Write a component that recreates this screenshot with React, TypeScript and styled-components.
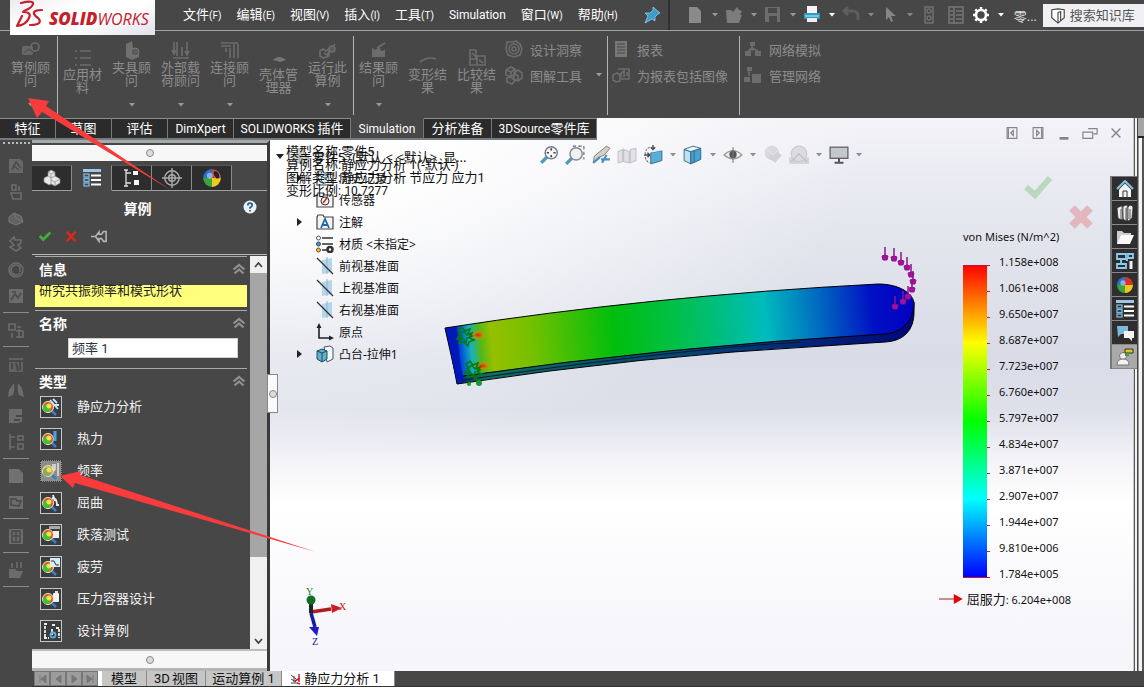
import React from "react";
import styled, { createGlobalStyle, css } from "styled-components";

const ui = `Roboto, "Noto Sans CJK SC", sans-serif`;
const noto = `"Noto Sans", "Noto Sans CJK SC", sans-serif`;

const GlobalStyle = createGlobalStyle`
  * { box-sizing: border-box; }
  body { margin: 0; background: #474747; font-family: ${ui}; font-size: 13px; }
  button { font: inherit; color: inherit; background: none; border: 0; padding: 0; margin: 0; }
`;

const Shell = styled.div`
  position: relative;
  display: flex;
  flex-direction: column;
  min-height: 100vh;
  background: #474747;
  color: #fff;
  overflow: hidden;
`;

/* ---------- text ---------- */
const Latin = styled.span<{ $size: number }>`
  font-size: ${(p) => p.$size}px;
`;

function Mixed({ text, size = 12 }: { text: string; size?: number }) {
  return (
    <>
      {text.split(/([\x20-\x7e]+)/).map((t, i) =>
        i % 2 ? <Latin key={i} $size={size}>{t}</Latin> : t
      )}
    </>
  );
}

/* ---------- title bar ---------- */
const TitleBar = styled.header`
  display: flex;
  align-items: center;
  height: 31px;
  border-bottom: 1px solid #a2a2a2;
  padding-left: 10px;
`;
const Logo = styled.div`
  position: relative;
  z-index: 2;
  align-self: flex-start;
  flex: none;
  display: flex;
  width: 145px;
  height: 35px;
  background: linear-gradient(160deg, #ececf0 0%, #fff 35%, #fff 60%, #dfe2ea 100%);
  color: #c4202c;
`;
const Brand = styled.div`
  font: italic 16px/20px "Open Sans", sans-serif;
  padding-top: 9px;
  margin-left: -1px;
  b { font-weight: 800; font-size: 17px; }
`;
const Menu = styled.nav`
  display: flex;
  gap: 15px;
  margin-left: 28px;
  button { white-space: nowrap; line-height: 20px; }
`;
const PinButton = styled.button`
  margin-left: 25px;
  width: 18px;
  height: 18px;
`;
const QuickBar = styled.div`
  display: flex;
  align-items: center;
  align-self: stretch;
  margin-left: 7px;
  padding-left: 16px;
  border-left: 2px solid #303030;
`;
const Quick = styled.button<{ $w: number }>`
  display: flex;
  align-items: center;
  gap: 8px;
  width: ${(p) => p.$w}px;
  height: 20px;
  flex: none;
`;
const DocName = styled.span`
  width: 36px;
  padding-left: 7px;
  white-space: nowrap;
  color: #e0e0e0;
`;
const Search = styled.label`
  display: flex;
  align-items: center;
  gap: 4px;
  flex: 1;
  height: 23px;
  margin-top: 1px;
  padding-left: 7px;
  background: #f0f0f4;
  overflow: hidden;
  input {
    flex: 1;
    min-width: 0;
    border: 0;
    padding: 0;
    background: none;
    font: 13px ${ui};
    color: #444;
    outline: none;
    &::placeholder { color: #555; opacity: 1; }
  }
`;

function Caret({ color = "#999" }: { color?: string }) {
  return (
    <svg width="6" height="4" viewBox="0 0 6 4"><path d="M0 0h6L3 3.6z" fill={color} /></svg>
  );
}

/* ---------- ribbon ---------- */
const Ribbon = styled.div`
  display: flex;
  height: 87px;
  padding: 5px 0 3px;
  color: #8c8c8c;
  overflow: hidden;
`;
const Group = styled.div<{ $lead?: boolean }>`
  display: flex;
  padding: ${(p) => (p.$lead ? "0 2px 0 6px" : "0 1px 0 0")};
  border-right: 1px solid #b4b4b4;
  &:last-child { border-right: 0; }
`;
const Big = styled.button<{ $low?: boolean }>`
  display: flex;
  flex-direction: column;
  align-items: center;
  width: 49px;
  height: 71px;
  padding-top: ${(p) => (p.$low ? 12 : 5)}px;
  line-height: 13px;
  color: #8c8c8c;
  span { display: block; width: 40px; }
  svg:last-child:not(:first-child) { margin-top: auto; }
`;
const Stack = styled.div<{ $w: number }>`
  display: flex;
  flex-direction: column;
  width: ${(p) => p.$w}px;
  padding-left: 3px;
`;
const Small = styled.button`
  display: flex;
  align-items: center;
  gap: 6px;
  height: 26px;
  white-space: nowrap;
  color: #8c8c8c;
  svg:last-child:not(:first-child) { margin-left: 8px; }
`;

const gray = { fill: "none", stroke: "#6c6c6c", strokeWidth: 1.6 };
const ribbonArt: Record<string, React.ReactNode> = {
  study: <g><rect x="1" y="5" width="11" height="9" rx="2" fill="#686868" /><circle cx="14" cy="6" r="4" {...gray} /><path d="M3 12l5-4 4 3" {...gray} stroke="#555" /></g>,
  material: <g {...gray}><path d="M7 3h11M7 10h11M7 17h11M2 3h2M2 10h2M2 17h2" /></g>,
  fixture: <g fill="#707070"><path d="M4 3l6-3 1 8 6 3v5l-7 3-6-3z" /><circle cx="13" cy="11" r="4" fill="#5c5c5c" stroke="#777" /></g>,
  load: <g {...gray}><path d="M3 1v10M6 1v14M11 6v9M16 1v13M1 9l2 4 2-4M14 10l2 4 2-4M2 17h16" /></g>,
  connect: <g {...gray}><path d="M1 2h17M1 5h10M6 7v4M10 7v10M14 3v14M18 3v14" /></g>,
  shell: <path d="M4 12q6-6 13 0l-6 2z" fill="#757575" />,
  run: <g {...gray}><path d="M2 10l3-2 3 2 3-2v7l-6 2-3-2zM6 12l3 2 8-11" /><circle cx="14" cy="8" r="3" fill="#5c5c5c" /></g>,
  result: <g fill="#6c6c6c"><path d="M3 7l4 2 3-4 2 5 4-1v7H3z" /><path d="M8 7l8-5" {...gray} /></g>,
  deform: <path d="M2 14q8-6 16-3" {...gray} />,
  compare: <g {...gray}><path d="M3 2h6v9H3zM10 8h8v9h-8zM5 5l4 4M12 12l4 3M3 11v6h6" /></g>,
  insight: <g {...gray}><path d="M3 3h6l3-1 4 3 2 5-2 6-6 2-6-2-2-6z" /><circle cx="10" cy="10" r="5" /><circle cx="10" cy="10" r="2" /></g>,
  plot: <g {...gray}><path d="M2 5l5-3 4 2v5l-4 3-5-2zM10 8l4-3 4 3v5l-4 3-4-2zM3 13l4-1 4 4-3 3-5-2zM2 5l5 2 4-3M7 7v5M10 8l4 3v5" /></g>,
  report: <g><rect x="4" y="2" width="12" height="16" fill="#777" /><path d="M6 5h8M6 8h8M6 11h8M6 14h8" stroke="#484848" /></g>,
  image: <g {...gray}><path d="M2 10l4-2 3 2v6l-4 1-3-2zM7 4h11v10h-8M10 12V8M13 12V6M16 11V7M9 9l5-4" /></g>,
  net: <g fill="#6c6c6c"><rect x="7" y="3" width="5" height="4" /><rect x="2" y="12" width="6" height="5" /><rect x="12" y="12" width="6" height="5" /><path d="M9 7v5M5 12l4-3 6 3" {...gray} /></g>,
  netm: <g fill="#6c6c6c"><rect x="4" y="2" width="5" height="4" /><rect x="1" y="12" width="6" height="5" /><rect x="9" y="9" width="9" height="9" /><path d="M6 6v5" {...gray} /></g>,
};
function Art({ name }: { name: string }) {
  return <svg width={20} height={20} viewBox="0 0 20 20" aria-hidden>{ribbonArt[name]}</svg>;
}
function BigButton({ art, label, caret }: { art: string; label: string; caret?: boolean }) {
  return (
    <Big $low={!caret}>
      <Art name={art} />
      <span>{label}</span>
      {caret && <Caret />}
    </Big>
  );
}

/* ---------- workspace ---------- */
const Workspace = styled.main`
  position: relative;
  flex: 1;
  display: grid;
  grid-template-columns: 32px 238px minmax(0, 1fr) 10px;
  grid-template-rows: 22px 1fr 16px;
`;
const RibbonTabs = styled.div`
  grid-area: 1 / 1 / 2 / 4;
  z-index: 1;
  justify-self: start;
  display: flex;
  border-bottom: 2px solid #777b7e;
`;
const RibbonTab = styled.button<{ $w: number; $on?: boolean }>`
  width: ${(p) => p.$w}px;
  background: ${(p) => (p.$on ? "#474747" : "#2b2b2b")};
  border-top: 1px solid ${(p) => (p.$on ? "#474747" : "#8c8c8c")};
  border-right: 1px solid #777;
  color: #fff;
  white-space: nowrap;
  line-height: 18px;
`;
const Rail = styled.aside`
  grid-area: 2 / 1 / 4 / 2;
  display: flex;
  flex-direction: column;
  align-items: center;
  padding-top: 2px;
  &::before { content: ""; width: 27px; border-top: 2px dotted #bbb; margin-bottom: 9px; }
  button { height: 26px; width: 18px; display: flex; align-items: center; }
  hr { width: 26px; margin: 3px 0 4px; border: 0; border-top: 1px solid #8a8a8a; }
`;

/* ---------- property panel ---------- */
const Panel = styled.section`
  grid-area: 2 / 2 / 3 / 3;
  display: flex;
  flex-direction: column;
  border-right: 3px solid #3b3b3b;
  border-top: 3px solid #a4a9ac;
  min-height: 0;
`;
const Grip = styled.div<{ $foot?: boolean }>`
  display: flex;
  align-items: center;
  justify-content: center;
  flex: none;
  height: ${(p) => (p.$foot ? 22 : 18)}px;
  background: #f7f7f7;
  border-top: 2px solid ${(p) => (p.$foot ? "#bdbdbd" : "#474747")};
  ${(p) => p.$foot && css`border-bottom: 3px solid #b5b5b5;`}
  &::after { content: ""; width: 6px; height: 6px; border: 1px solid #888; border-radius: 50%; background: #ddd; }
`;
const PanelTabs = styled.div`
  display: flex;
  height: 26px;
  margin-top: 4px;
  &::after { content: ""; flex: 1; border-bottom: 1px solid #a0a0a0; }
`;
const PanelTab = styled.button<{ $on?: boolean }>`
  display: flex;
  align-items: center;
  justify-content: center;
  width: 40px;
  background: ${(p) => (p.$on ? "#474747" : "#2d2d2d")};
  border-right: 1px solid #8c8c8c;
  border-top: 1px solid ${(p) => (p.$on ? "#474747" : "#555")};
  border-bottom: 1px solid ${(p) => (p.$on ? "#474747" : "#a0a0a0")};
`;
const PanelTitle = styled.div`
  display: grid;
  grid-template-columns: 1fr auto;
  align-items: center;
  height: 34px;
  padding: 0 10px;
  h2 { margin: 0; font-size: 14px; font-weight: 700; text-align: center; padding-right: 10px; }
`;
const Actions = styled.div`
  display: flex;
  align-items: center;
  gap: 11px;
  height: 30px;
  padding: 0 0 8px 5px;
  border-bottom: 1px solid #b8b8b8;
  margin-bottom: 1px;
  button { height: 16px; }
`;
const ScrollArea = styled.div`
  flex: 1;
  display: flex;
  min-height: 0;
`;
const Content = styled.div`
  flex: 1;
  padding: 0 3px;
`;
const Section = styled.section<{ $h?: number }>`
  border-top: 1px solid #a8a8a8;
  height: ${(p) => (p.$h ? p.$h + "px" : "auto")};
`;
const SectionHead = styled.div`
  display: flex;
  align-items: center;
  justify-content: space-between;
  height: 22px;
  padding: 2px 1px 0 4px;
  h3 { margin: 0; font-size: 14px; font-weight: 700; }
  button { display: flex; }
`;
const Note = styled.p`
  margin: 6px 0 0;
  height: 22px;
  padding-left: 4px;
  background: #ffff7d;
  color: #222;
  line-height: 12px;
`;
const NameInput = styled.input`
  display: block;
  width: 170px;
  height: 20px;
  margin: 5px 0 0 33px;
  padding: 0 3px 2px;
  border: 1px solid #d0d0d0;
  background: #fff;
  color: #2c3440;
  font: 13px ${ui};
`;
const Option = styled.label`
  display: flex;
  align-items: center;
  gap: 15px;
  height: 32px;
  padding-left: 5px;
  line-height: 18px;
  color: #f0f0f0;
`;
const OptionBox = styled.span`
  display: grid;
  width: 22px;
  height: 22px;
  > * { grid-area: 1 / 1; }
  svg { pointer-events: none; margin: 1px; }
  input {
    appearance: none;
    margin: 0;
    width: 22px;
    height: 22px;
    border: 1px solid #c8c8c8;
    background: #3a3c3e;
    &:checked { background: #8c8c88; border: 1px dotted #333; }
  }
`;
const Scrollbar = styled.div`
  width: 17px;
  display: flex;
  flex-direction: column;
  background: #f0f0f0;
  button { height: 17px; display: flex; align-items: center; justify-content: center; }
`;
const Thumb = styled.div`
  height: 284px;
  background: #a6a6a6;
  & + button { margin-top: auto; }
`;

/* ---------- graphics area ---------- */
const Viewport = styled.section`
  grid-area: 1 / 3 / 3 / 4;
  position: relative;
  background:
    radial-gradient(ellipse 600px 340px at 0% 0%, #fff 0%, rgba(255,255,255,.95) 30%, rgba(255,255,255,0) 100%),
    linear-gradient(180deg, #f3f3f8 0%, #e4e6ee 20%, #d9dce7 43%, #dee0ea 53%, #f4f4f8 62%, #fff 70%, #f9f9fc 85%, #f5f5fa 100%);
  border-right: 1px solid #c8c8c8;
  color: #111;
`;
const ViewBar = styled.div`
  display: flex;
  justify-content: space-between;
  padding: 6px 9px 0 269px;
`;
const ViewTools = styled.div`
  display: flex;
  gap: 6px;
  padding-top: 21px;
`;
const Tool = styled.button<{ $menu?: boolean }>`
  display: flex;
  align-items: center;
  justify-content: space-between;
  width: ${(p) => (p.$menu ? 33 : 20)}px;
  margin-right: ${(p) => (p.$menu ? 1 : 0)}px;
  height: 20px;
`;
const WindowButtons = styled.div`
  display: flex;
  gap: 10px;
  button { width: 16px; height: 18px; }
`;
const Tree = styled.ul`
  position: absolute;
  left: 4px;
  top: 27px;
  margin: 0;
  padding: 0;
  list-style: none;
  font: 12px ${noto};
`;
const Node = styled.li<{ $root?: boolean }>`
  display: flex;
  align-items: center;
  gap: ${(p) => (p.$root ? 2 : 5)}px;
  height: 22px;
  padding-left: ${(p) => (p.$root ? 0 : 21)}px;
  font-size: ${(p) => (p.$root ? 13 : 12)}px;
  white-space: pre;
`;
const Twist = styled.span`
  display: flex;
  width: 16px;
  padding-left: 2px;
`;
const PlotInfo = styled.div`
  position: absolute;
  left: 16px;
  top: 27px;
  line-height: 13px;
  white-space: pre;
`;
const Model = styled.svg`
  position: absolute;
  left: 160px;
  top: 122px;
`;
const Triad = styled.svg`
  position: absolute;
  left: 30px;
  bottom: 21px;
`;
const Confirm = styled.div`
  position: absolute;
  right: 39px;
  top: 56px;
  display: flex;
  align-items: flex-start;
  gap: 15px;
  button + button { margin-top: 30px; }
`;
const Legend = styled.div`
  position: absolute;
  right: 62px;
  top: 111px;
  width: 132px;
  font: 11px/16px ${noto};
`;
const LegendTitle = styled.div`
  padding-left: 24px;
  white-space: nowrap;
  height: 20px;
`;
const LegendScale = styled.div`
  display: flex;
  padding-left: 24px;
  > svg { margin-top: 16px; }
  ol { margin: 0; padding: 0 0 0 8px; list-style: none; }
  li { height: 26px; line-height: 26px; }
`;
const Yield = styled.div`
  display: flex;
  align-items: center;
  gap: 3px;
  height: 24px;
  white-space: nowrap;
  font-size: 13px;
`;
const Handle = styled.button`
  position: absolute;
  z-index: 2;
  left: 267px;
  top: 256px;
  width: 11px;
  height: 39px;
  background: #fafafa;
  border: 1px solid #888;
  display: flex;
  align-items: center;
  justify-content: center;
  &::after { content: ""; width: 6px; height: 6px; border: 1px solid #888; border-radius: 50%; background: #ddd; flex: none; }
`;
const TaskPane = styled.div`
  position: absolute;
  z-index: 2;
  right: 7px;
  top: 58px;
  border: solid #777;
  border-width: 1px 0 0 2px;
`;
const TaskButton = styled.button<{ $on?: boolean }>`
  display: flex;
  align-items: center;
  justify-content: center;
  width: 25px;
  height: 24px;
  background: ${(p) => (p.$on ? "#a9a9a9" : "#2e2e2e")};
  border-bottom: 1px solid #888;
`;
const Frame = styled.div`
  grid-area: 1 / 4 / 3 / 5;
  background: linear-gradient(90deg, #555 0 1px, #f4f4f4 1px 3px, #444 3px 4px, #999 4px 5px, #f4f4f4 5px 8px, #555 8px 10px);
  &::before { content: ""; display: block; height: 18px; margin-left: 4px; background: #a5a5a8; border-bottom: 2px solid #222; }
`;
const Sheets = styled.div`
  grid-area: 3 / 2 / 4 / 5;
  display: flex;
  height: 16px;
  border-bottom: 1px solid #333;
  padding-left: 2px;
`;
const SheetNav = styled.button`
  display: flex;
  align-items: center;
  justify-content: center;
  width: 16px;
  background: #9c9c9c;
  border: 1px solid #777;
`;
const Sheet = styled.button<{ $w: number; $on?: boolean }>`
  display: flex;
  align-items: center;
  justify-content: center;
  gap: 2px;
  width: ${(p) => p.$w}px;
  padding-right: ${(p) => (p.$on ? 6 : 0)}px;
  background: ${(p) => (p.$on ? "#fff" : "#c6c6c6")};
  border-right: 1px solid #888;
  color: #111;
  white-space: nowrap;
  line-height: 12px;
`;
const SheetGap = styled.span`
  width: 4px;
  background: #fff;
`;
const Callouts = styled.svg`
  position: absolute;
  z-index: 5;
  left: 0;
  top: 0;
  pointer-events: none;
`;

/* ---------- drawings ---------- */
const Sphere = ({ x = 9, y = 9, r = 7 }: { x?: number; y?: number; r?: number }) => (
  <g>
    <path d={`M${x} ${y}L${x - r} ${y}A${r} ${r} 0 0 1 ${x} ${y - r}z`} fill="#2c6fd0" />
    <path d={`M${x} ${y}L${x} ${y - r}A${r} ${r} 0 0 1 ${x + r} ${y}z`} fill="#d8322a" />
    <path d={`M${x} ${y}L${x + r} ${y}A${r} ${r} 0 0 1 ${x} ${y + r}z`} fill="#f2c81c" />
    <path d={`M${x} ${y}L${x} ${y + r}A${r} ${r} 0 0 1 ${x - r} ${y}z`} fill="#3aa43c" />
    <circle cx={x - 2} cy={y - 2} r={r / 3} fill="#fff" opacity=".45" />
  </g>
);
const List = () => (
  <g>
    <rect x="0" y="0" width="18" height="3" fill="#9cc8e8" />
    <g fill="none" stroke="#7db8e0" strokeWidth="1.300"><rect x="1" y="5" width="5" height="3" /><rect x="1" y="9.500" width="5" height="3" /><rect x="1" y="14" width="5" height="3" /></g>
    <path d="M8 6.500h10M8 11h10M8 15.500h10" stroke="#fff" strokeWidth="1.800" />
  </g>
);
const Svg = ({ s = 18, children }: { s?: number; children: React.ReactNode }) => (
  <svg width={s} height={s} viewBox="0 0 18 18" aria-hidden>{children}</svg>
);
const Chevrons = () => (
  <svg width="14" height="12" viewBox="0 0 14 12" aria-hidden>
    <path d="M1.500 6.500L7 2l5.500 4.500M2.500 10.500L7 6.500l4.500 4" fill="none" stroke="#909090" strokeWidth="2.200" />
  </svg>
);

const quickIcons: { art: React.ReactNode; w: number; caret?: string }[] = [
  { w: 39, caret: "#999", art: <path d="M3 1h8l4 4v12H3z" fill="#8a8a8a" /> },
  { w: 39, caret: "#999", art: <path d="M1 4h5l2 2 4-5 2 3 3 1-2 4 2 0-3 8H2z" fill="#7c7c7c" /> },
  { w: 39, caret: "#999", art: <g><path d="M1 1h15v15H1z" fill="#6c6c6c" /><path d="M4 2h9v5H4zM5 10h8v6H5z" fill="#484848" /></g> },
  { w: 39, caret: "#fff", art: <g><path d="M4 0h10v7H4z" fill="#f4f4f4" /><rect x="1" y="7" width="16" height="6" rx="1" fill="#2e9cc4" /><path d="M2 10h14" stroke="#cfeaf4" /><path d="M4 12h10v4H4z" fill="#eee" /></g> },
  { w: 39, caret: "#888", art: <path d="M2 5h9q5 0 5 5v4M6 1L2 5l4 4" fill="none" stroke="#5e5e5e" strokeWidth="3" /> },
  { w: 39, caret: "#888", art: <path d="M5 1v13l3-3 2 5 2-1-2-5h5z" fill="#858585" /> },
  { w: 27, art: <g fill="none" stroke="#707070" strokeWidth="1.500"><rect x="5" y="1" width="8" height="16" /><circle cx="9" cy="5" r="2" /><circle cx="9" cy="12" r="2" /></g> },
  { w: 25, art: <g fill="none" stroke="#777" strokeWidth="1.500"><rect x="2" y="1" width="14" height="16" /><path d="M7 1v16M9 5h6M9 9h6M9 13h6M3 5h3M3 9h3M3 13h3" /></g> },
  { w: 35, caret: "#fff", art: <g><circle cx="9" cy="9" r="5" fill="none" stroke="#fff" strokeWidth="2.600" /><path d="M9 1v3M9 14v3M1 9h3M14 9h3M3.300 3.300l2 2M12.700 12.700l2 2M14.700 3.300l-2 2M5.300 12.700l-2 2" stroke="#fff" strokeWidth="2.500" /></g> },
];

const railArt: React.ReactNode[] = [
  <g><path d="M2 2h11l3 3v11H2z" fill="#686868" /><path d="M5 13l4-8 5 6M6 8l6 5" {...gray} stroke="#4c4c4c" /></g>,
  <g {...gray}><rect x="5" y="2" width="4" height="5" /><path d="M4 10h10v6H6zM12 3v5" /></g>,
  <g fill="#626262" stroke="#777"><path d="M2 8l5-4 7 3 2 6-7 3-7-3z" /><path d="M7 4l2 5 6 3" fill="none" /></g>,
  <path d="M3 6l4-4 1 3h6v3l-3 2 3 3-5 3-6-4 4-2z" {...gray} />,
  <g {...gray}><circle cx="9" cy="9" r="7" /><path d="M13 12a5 5 0 1 1 0-6v5" /></g>,
  <g><rect x="2" y="2" width="14" height="14" fill="#6c6c6c" /><path d="M4 13l4-6 3 4 3-5M5 5h4" {...gray} stroke="#4c4c4c" /></g>,
  null,
  <g {...gray}><path d="M2 3h6v6H2zM10 6h4M5 12v5M9 10h7v6H9M12 8v9" /></g>,
  null,
  <g><rect x="2" y="3" width="14" height="14" fill="#626262" /><path d="M2 6h14M5 8v6M9 8l2 8M13 7v8" stroke="#484848" strokeWidth="2" /></g>,
  <path d="M7 2q1 7-1 12l-5 2 1-7zM11 2q-1 7 1 12l5 2-2-9z" fill="#6c6c6c" />,
  <g><path d="M2 2h13v14H2z" fill="#6c6c6c" /><path d="M9 9h7v7h-4M7 13h6" fill="none" stroke="#484848" strokeWidth="2" /></g>,
  <g {...gray}><path d="M3 1v16M3 4h5M3 14h5M11 3h5v4h-5zM11 11h5v5h-5z" /></g>,
  null,
  <path d="M2 2h10l4 4v10H2z" fill="#717171" />,
  <g><path d="M2 3h14v13H2z" fill="#6c6c6c" /><path d="M4 12V6h5l1 2h4l-2 5z" fill="none" stroke="#484848" strokeWidth="1.500" /></g>,
  null,
  <g><path d="M2 2h14v15H2z" fill="#6c6c6c" /><path d="M5 15V4h8v11zM9 5v9M6 9h6" fill="none" stroke="#484848" strokeWidth="1.500" /></g>,
  null,
  <g fill="#6c6c6c"><path d="M2 8h6l2 2h6l-3 7H2z" /><path d="M5 2v5M10 1v6M14 1v6" {...gray} /></g>,
  null,
];

const studyExtras: React.ReactNode[] = [
  <path d="M9 3l8 9M12 2l4 4M14 8h4" stroke="#cfe4ff" strokeWidth="1.800" />,
  <path d="M14 2v10" stroke="#4aa0f0" strokeWidth="3" />,
  <path d="M12 3v5q1 3 2 0V3M17 2v13" stroke="#e8e4d8" fill="none" strokeWidth="1.500" />,
  <path d="M11 5q5 0 5 7h2M12 2l2 6" stroke="#eee" fill="none" strokeWidth="1.800" />,
  <g><path d="M8 1h11v3H8z" fill="#aaa" /><rect x="12" y="6" width="6" height="7" fill="#eee" /></g>,
  <g><rect x="9" y="1" width="10" height="9" fill="#d8ecfa" /><path d="M10 4h3l2 4h3" stroke="#333" fill="none" /></g>,
  <g><rect x="12" y="4" width="6" height="9" rx="1" fill="#f4f4f4" /><path d="M14 2h3v2h-3z" fill="#ddd" /></g>,
];
const studies = ["静应力分析", "热力", "频率", "屈曲", "跌落测试", "疲劳", "压力容器设计", "设计算例"];

const Plane = () => (
  <g><path d="M6 3l10-2v14l-10 2z" fill="#b5d6ea" /><path d="M11 0v17" stroke="#8fb6cc" /><path d="M1 1l16 16" stroke="#333" strokeWidth="1.300" /></g>
);
const Folder = ({ children }: { children: React.ReactNode }) => (
  <g><path d="M1 16V4l1-2h5l1 2h9v12z" fill="#f4f4f4" stroke="#444" strokeWidth="1.200" />{children}</g>
);
const nodes: { label: string; open?: boolean; art: React.ReactNode }[] = [
  { label: "历史记录", open: true, art: <Folder><circle cx="9" cy="10" r="4" fill="#d8eef8" stroke="#3c7ea0" /><path d="M9 8v2l2 1" stroke="#333" fill="none" /></Folder> },
  { label: "传感器", art: <Folder><circle cx="9" cy="10" r="4" fill="none" stroke="#333" /><path d="M7 12l4-5" stroke="#d02020" strokeWidth="1.500" /></Folder> },
  { label: "注解", open: true, art: <Folder><path d="M5 15L9 6l4 9M6.500 12h5" fill="none" stroke="#2468a0" strokeWidth="1.800" /></Folder> },
  { label: "材质 <未指定>", art: <g><circle cx="2.500" cy="3" r="2" fill="#fff" stroke="#555" /><circle cx="2.500" cy="9" r="2" fill="#3c9cd8" stroke="#345" /><circle cx="2.500" cy="15" r="2" fill="#f0c020" stroke="#653" /><path d="M6 3h11M6 9h11M6 15h5" stroke="#333" strokeWidth="1.500" /><circle cx="14" cy="14.500" r="2.500" fill="#fff" stroke="#333" strokeWidth="2.500" /></g> },
  { label: "前视基准面", art: <Plane /> },
  { label: "上视基准面", art: <Plane /> },
  { label: "右视基准面", art: <Plane /> },
  { label: "原点", art: <g><path d="M3 4v11h11" fill="none" stroke="#222" strokeWidth="1.600" /><path d="M3 0l2.500 5h-5zM18 15l-5 2.500v-5z" fill="#222" /></g> },
  { label: "凸台-拉伸1", open: true, art: <g><path d="M8 2l6-1 3 2v11l-6 3z" fill="#f4f8fa" stroke="#456" /><path d="M1 6l5-2 5 2v8l-5 3-5-3z" fill="#5fb0d0" stroke="#1c4a60" /><path d="M1 6l5 2 5-2M6 8v9" stroke="#1c4a60" fill="none" /></g> },
];

const viewTools: { art: React.ReactNode; menu?: boolean }[] = [
  { art: <g><path d="M2 16l5-5" stroke="#4a9cc4" strokeWidth="3" /><circle cx="11" cy="7" r="5.500" fill="#f4f8fa" stroke="#778" strokeWidth="1.300" /><path d="M11 3v2M11 9v2M7 7h2M13 7h2" stroke="#444" strokeWidth="1.500" /></g> },
  { art: <g><path d="M7 1h10v12" fill="none" stroke="#666" strokeDasharray="3 2" /><path d="M1 17l5-5" stroke="#4a9cc4" strokeWidth="3" /><circle cx="10" cy="8" r="5.500" fill="#eef2f0" stroke="#889" strokeWidth="1.300" /></g> },
  { art: <g><path d="M14 1l3 2-5 6-5 2-5 5 1-6z" fill="#d8d0c4" stroke="#777" strokeWidth=".8" /><path d="M2 16l6-5M9 13h8M14 9l-4 7" stroke="#4a90c0" strokeWidth="2" /></g> },
  { art: <g fill="#e2e2e6" stroke="#c4c4ca"><path d="M1 6l4-2v11l-4 1zM6 4l5 2v10l-5-1zM12 4l5-1v11l-5 2z" /></g> },
  { menu: true, art: <g><path d="M7 7l10-2v9l-10 3z" fill="#5aaedc" stroke="#2c6480" strokeWidth=".8" /><path d="M7 7l3-2 7-1v1z" fill="#d8ecf6" /><path d="M1 9h5M4 7l2 2-2 2M9 0v4M7 2l2 2 2-2" stroke="#444" fill="none" strokeWidth="1.200" /><path d="M6 2Q2 4 2 8M2 11q1 4 4 5" stroke="#777" fill="none" strokeDasharray="2 1" /></g> },
  { menu: true, art: <g stroke="#2c6480" strokeWidth=".8"><path d="M1 4l6 2v11l-6-3z" fill="#bfe0ee" /><path d="M7 6l9-3v10l-9 4z" fill="#4aa2d0" /><path d="M1 4l8-3 7 2-9 3z" fill="#e8f4fa" /><path d="M10 5v11" /></g> },
  { menu: true, art: <g><path d="M1 9q8-8 16 0-8 7-16 0z" fill="#eee" stroke="#999" strokeWidth="1.200" /><circle cx="9" cy="8.500" r="3.300" fill="#555" /><path d="M9 2v14" stroke="#777" /></g> },
  { art: <g opacity=".6"><circle cx="8" cy="7" r="6.500" fill="#c8c8ce" /><path d="M11 5l6 4-6 7-7-5z" fill="#bcbcc2" /><path d="M4 4l5 5 4-4" stroke="#ddd" fill="none" /></g> },
  { menu: true, art: <g opacity=".7"><path d="M0 11h18v6H0z" fill="#c8c8ce" /><circle cx="9" cy="8" r="7" fill="#d4d4d8" stroke="#b8b8be" /><path d="M2 15l7-7 7 7" stroke="#aaa" fill="none" /></g> },
  { menu: true, art: <g><rect x="1" y="2" width="16" height="10" fill="#c4c8cc" stroke="#666" strokeWidth="1.200" /><path d="M9 12v4M5 16h8" stroke="#555" strokeWidth="1.800" /></g> },
];
const windowIcons = [
  <path d="M3.500 3v12h11V3zM7.500 9l3-3v6zM5 4v10" />, <path d="M3.500 3v12h11V3zM10.500 9l-3-3v6zM13 4v10" />,
  <path d="M4 15h10" strokeWidth="3" />, <path d="M7 4h10v6h-4M1 8h11v7H1z" />, <path d="M4 4l10 10M14 4L4 14" strokeWidth="1.600" />,
];
const taskIcons: React.ReactNode[] = [
  <g><path d="M1 9l8-8 8 8" fill="none" stroke="#7cc0e4" strokeWidth="2.200" /><path d="M3 9.500l6-6 6 6V17H3z" fill="#f4f4f4" /><path d="M7 17v-6h4v6" fill="none" stroke="#333" /></g>,
  <g fill="#eee" stroke="#333" strokeWidth=".8"><path d="M1 4l4-2 2 1v12l-2 1-3-2zM6 3l4-2 2 1v13l-2 2-3-2zM11 3l4-2 2 2-1 11-3 3-2-1z" /><path d="M5 5v11M10 4v12M14 5v11" /></g>,
  <g><path d="M1 16V3h5l2 2h7v3" fill="#ccc" /><path d="M1 16l4-9h13l-4 9z" fill="#f8f8f8" /></g>,
  <g fill="none" stroke="#8ccaf0" strokeWidth="1.800"><path d="M1 2h9v5H1zM12 2h5v4h-5zM1 16h9v-4H1zM5 7v5M12 8h-2" /><path d="M15 9v8" stroke="#eee" strokeWidth="3" /></g>,
  <Sphere r={8} />,
  <List />,
  <g><path d="M1 2h11v8H5l-3 3z" fill="#7ab8dc" /><path d="M8 7h10v7h-2v3l-3-3H8z" fill="#f4f4f4" /></g>,
  <g><circle cx="7" cy="8" r="3.500" fill="#eee" stroke="#777" /><path d="M1 17q0-6 6-6t6 6z" fill="#f4f4f4" stroke="#777" /><path d="M9 1h8v4H9z" fill="#e0c020" stroke="#333" /><path d="M9 5h4v3H9z" fill="#40a040" /></g>,
];
const levels = ["1.158e+008", "1.061e+008", "9.650e+007", "8.687e+007", "7.723e+007", "6.760e+007", "5.797e+007", "4.834e+007", "3.871e+007", "2.907e+007", "1.944e+007", "9.810e+006", "1.784e+005"];
const loads = [[885, 257], [894, 258], [901, 262], [907, 267], [911, 274], [913, 281], [912, 289], [908, 296], [903, 301], [895, 306]];

function StressModel() {
  const knot = "l4-3 3 4 5-2-2 5 4 2-5 2-1 4-4-4-5 1 3-5z";
  return (
    <Model width="500" height="160" viewBox="430 240 500 160" aria-label="von Mises">
      <defs>
        <linearGradient id="stress" gradientUnits="userSpaceOnUse" x1="445" y1="350" x2="914" y2="300">
          <stop offset="0" stopColor="#0014b8" /><stop offset=".03" stopColor="#0040d8" />
          <stop offset=".055" stopColor="#18b0c0" /><stop offset=".075" stopColor="#50b818" />
          <stop offset=".1" stopColor="#94c000" /><stop offset=".18" stopColor="#78c000" />
          <stop offset=".36" stopColor="#00be0c" /><stop offset=".5" stopColor="#00c04c" />
          <stop offset=".6" stopColor="#00be88" /><stop offset=".68" stopColor="#00bcbc" />
          <stop offset=".8" stopColor="#0068c0" /><stop offset=".91" stopColor="#0010c4" /><stop offset="1" stopColor="#0000c0" />
        </linearGradient>
        <linearGradient id="side" x1="0" x2="1">
          <stop offset="0" stopColor="#000a80" /><stop offset=".08" stopColor="#107060" />
          <stop offset=".3" stopColor="#085868" /><stop offset=".6" stopColor="#063a78" /><stop offset="1" stopColor="#000878" />
        </linearGradient>
        <radialGradient id="hot"><stop offset="0" stopColor="#e02000" /><stop offset=".5" stopColor="#e07000" stopOpacity=".8" /><stop offset="1" stopColor="#c0b000" stopOpacity="0" /></radialGradient>
      </defs>
      <path d="M447 330L457 384Q640 356 823 346L885 342C904 341 914 330 914 312V302L880 310L640 330z" fill="url(#side)" stroke="#000" />
      <path d="M445 328Q650 296 878 284C900 284 914 294 914 304C914 320 902 333 885 334Q670 346 456 377z" fill="url(#stress)" stroke="#000" />
      <path d="M457 381Q670 350 800 342" fill="none" stroke="#001a30" />
      <path d="M446 329l11 54 7-1-4-21-3-34z" fill="#0018b8" />
      <ellipse cx="478" cy="335" rx="8" ry="5" fill="url(#hot)" />
      <ellipse cx="482" cy="366" rx="9" ry="5" fill="url(#hot)" />
      <g fill="none" stroke="#007c10" strokeWidth="1.600">
        <path d={"M458 330" + knot} /><path d={"M460 334" + knot} /><path d={"M466 364" + knot} /><path d={"M468 368" + knot} />
      </g>
      <g fill="#10a020"><circle cx="469" cy="384" r="2" /><circle cx="479" cy="383" r="3" /></g>
      <g stroke="#901090" fill="#a8109c">
        {loads.map(([x, y]) => (
          <g key={y}><path d={`M${x} ${y - 10}v10`} strokeWidth="1.500" /><path d={`M${x - 3} ${y - 1}l3-1 3 1-1 4h-4z`} /></g>
        ))}
      </g>
    </Model>
  );
}

export default function App() {
  return (
    <Shell>
      <GlobalStyle />
      <TitleBar>
        <Logo>
          <svg width="40" height="35" viewBox="0 0 40 35" aria-hidden>
            <g fill="none" stroke="#c4202c" strokeWidth="2.200" strokeLinecap="round" strokeLinejoin="round">
              <path d="M11 3q13-3 12 1-1 4-9 7" /><path d="M13 12q9 0 6 6-3 7-12 8l5-10" />
              <path d="M32 10q-9 0-8 4 1 2 4 4 3 3 1 5-2 2-9 2" />
            </g>
          </svg>
          <Brand><b>SOLID</b>WORKS</Brand>
        </Logo>
        <Menu>
          {["文件(F)", "编辑(E)", "视图(V)", "插入(I)", "工具(T)", "Simulation", "窗口(W)", "帮助(H)"].map((m) => (
            <button key={m}><Mixed text={m} size={m === "Simulation" ? 12 : 10} /></button>
          ))}
        </Menu>
        <PinButton aria-label="固定">
          <Svg><path d="M10 1l7 6-2 1-3 3 0 4-3-2-7 4 3-7-3-3h5l3-3z" fill="#3c9ccc" stroke="#9ccce4" strokeWidth=".8" /></Svg>
        </PinButton>
        <QuickBar>
          {quickIcons.map((q, i) => (
            <Quick key={i} $w={q.w}><Svg>{q.art}</Svg>{q.caret && <Caret color={q.caret} />}</Quick>
          ))}
          <DocName>零...</DocName>
        </QuickBar>
        <Search>
          <Svg s={16}><path d="M2 2l7-1 7 1v9l-7 6-7-6z" fill="#fff" stroke="#444" strokeWidth="1.300" /><path d="M9 5v12M9 5l3-1v10" fill="none" stroke="#444" strokeWidth="1.300" /></Svg>
          <input placeholder="搜索知识库" aria-label="搜索知识库" />
        </Search>
      </TitleBar>

      <Ribbon>
        <Group $lead><BigButton art="study" label="算例顾问" caret /></Group>
        <Group>
          <BigButton art="material" label="应用材料" />
          <BigButton art="fixture" label="夹具顾问" caret />
          <BigButton art="load" label="外部载荷顾问" caret />
          <BigButton art="connect" label="连接顾问" caret />
          <BigButton art="shell" label="壳体管理器" />
          <BigButton art="run" label="运行此算例" caret />
        </Group>
        <Group>
          <BigButton art="result" label="结果顾问" caret />
          <BigButton art="deform" label="变形结果" />
          <BigButton art="compare" label="比较结果" />
          <Stack $w={105}>
            <Small><Art name="insight" />设计洞察</Small>
            <Small><Art name="plot" />图解工具<Caret /></Small>
          </Stack>
        </Group>
        <Group>
          <Stack $w={130}>
            <Small><Art name="report" />报表</Small>
            <Small><Art name="image" />为报表包括图像</Small>
          </Stack>
        </Group>
        <Group>
          <Stack $w={110}>
            <Small><Art name="net" />网络模拟</Small>
            <Small><Art name="netm" />管理网络</Small>
          </Stack>
        </Group>
      </Ribbon>

      <Workspace>
        <RibbonTabs>
          <RibbonTab $w={56}>特征</RibbonTab>
          <RibbonTab $w={56}>草图</RibbonTab>
          <RibbonTab $w={56}>评估</RibbonTab>
          <RibbonTab $w={66}><Mixed text="DimXpert" /></RibbonTab>
          <RibbonTab $w={117}><Mixed text="SOLIDWORKS 插件" /></RibbonTab>
          <RibbonTab $w={73} $on><Mixed text="Simulation" /></RibbonTab>
          <RibbonTab $w={68}>分析准备</RibbonTab>
          <RibbonTab $w={105}><Mixed text="3DSource零件库" /></RibbonTab>
        </RibbonTabs>

        <Rail>
          {railArt.map((a, i) => (a ? <button key={i}><Svg>{a}</Svg></button> : <hr key={i} />))}
        </Rail>

        <Panel>
          <Grip />
          <PanelTabs>
            <PanelTab><Svg><g fill="#e8e8e8" stroke="#888" strokeWidth=".7"><path d="M1 9l4-2V3l3-2 4 2v4l5 3v4l-5 3-4-2-2 1-5-3z" /><path d="M5 7l3 2 4-2M8 9v6M12 13l5-3M12 13v4M12 13l-4-2M5 3l3 2 4-2M8 5v4" fill="none" /></g></Svg></PanelTab>
            <PanelTab $on><Svg><List /></Svg></PanelTab>
            <PanelTab><Svg><path d="M3 1v16M3 4h5M3 14h5M1 1h4M1 17h4" stroke="#ddd" strokeWidth="1.300" fill="none" /><path d="M10 2h5v4h-5zM11 11h5v5h-5z" fill="#f4f4f4" /></Svg></PanelTab>
            <PanelTab><Svg s={20}><g fill="none" stroke="#aaa" strokeWidth="1.300"><circle cx="9" cy="9" r="6.500" /><path d="M9 0v18M0 9h18" /><circle cx="9" cy="9" r="3" /></g></Svg></PanelTab>
            <PanelTab><Svg s={20}><Sphere r={8} /><ellipse cx="13" cy="6" rx="2.500" ry="4" fill="#222" stroke="#c88" strokeWidth=".6" transform="rotate(-30 13 6)" /></Svg></PanelTab>
          </PanelTabs>
          <PanelTitle>
            <h2>算例</h2>
            <button aria-label="帮助"><svg width="14" height="14" viewBox="0 0 14 14"><circle cx="7" cy="7" r="6.500" fill="#e8f2f8" /><path d="M4.800 5.400q0-2.200 2.200-2.200t2.200 2q0 1.300-2.200 2.300v1.200M7 10v1.600" fill="none" stroke="#1f5f88" strokeWidth="1.700" /></svg></button>
          </PanelTitle>
          <Actions>
            <button aria-label="确定"><Svg s={16}><path d="M3 9l4 4 8-8" fill="none" stroke="#3fae3a" strokeWidth="3" /></Svg></button>
            <button aria-label="取消"><Svg s={16}><path d="M3 4l10 11M13 4L3 15" fill="none" stroke="#d22a20" strokeWidth="3" /></Svg></button>
            <button aria-label="保持可见"><Svg s={16}><path d="M0 9.500h5l4-5v2.500h3l2-3h3v11h-3l-2-3H9v3l-4-5.500" fill="none" stroke="#b4b4b4" strokeWidth="1.800" /></Svg></button>
          </Actions>
          <ScrollArea>
            <Content>
              <Section $h={54}>
                <SectionHead><h3>信息</h3><button aria-label="折叠"><Chevrons /></button></SectionHead>
                <Note>研究共振频率和模式形状</Note>
              </Section>
              <Section $h={58}>
                <SectionHead><h3><label htmlFor="study-name">名称</label></h3><button aria-label="折叠"><Chevrons /></button></SectionHead>
                <NameInput id="study-name" defaultValue="频率 1" />
              </Section>
              <Section>
                <SectionHead><h3>类型</h3><button aria-label="折叠"><Chevrons /></button></SectionHead>
                {studies.map((s, i) => (
                  <Option key={s}>
                    <OptionBox>
                      <input type="radio" name="study" defaultChecked={i === 2} />
                      <svg width="20" height="20" viewBox="0 0 20 20" aria-hidden>
                        {i < 7 ? (
                          <g>
                            <path d="M10 13l5 5" stroke="#3c7cd0" strokeWidth="2.500" />
                            <circle cx="7" cy="10" r="5.500" fill={i === 2 ? "#c8b460" : "#e84c20"} stroke={i === 2 ? "#d8e0d0" : "#e8f0d0"} />
                            <circle cx="6" cy="11" r="4" fill={i === 2 ? "#88a860" : "#46c030"} /><circle cx="8" cy="9" r="2.500" fill="#f4e050" />
                            {studyExtras[i]}
                          </g>
                        ) : (
                          <g fill="none" stroke="#eee" strokeWidth="1.800"><path d="M3 3h4M4 5v12M3 17h5M11 4h3M15 7h3v10M11 8v6" strokeDasharray="3 1" /><circle cx="12" cy="14" r="2.500" stroke="#60a8e0" /></g>
                        )}
                      </svg>
                    </OptionBox>
                    {s}
                  </Option>
                ))}
              </Section>
            </Content>
            <Scrollbar>
              <button aria-label="向上"><svg width="9" height="6" viewBox="0 0 9 6"><path d="M1 5l3.500-4L8 5" fill="none" stroke="#444" strokeWidth="1.800" /></svg></button>
              <Thumb />
              <button aria-label="向下"><svg width="9" height="6" viewBox="0 0 9 6"><path d="M1 1l3.500 4L8 1" fill="none" stroke="#444" strokeWidth="1.800" /></svg></button>
            </Scrollbar>
          </ScrollArea>
          <Grip $foot />
        </Panel>

        <Viewport>
          <ViewBar>
            <ViewTools>
              {viewTools.map((t, i) => (
                <Tool key={i} $menu={t.menu}><Svg s={20}>{t.art}</Svg>{t.menu && <Caret color="#8a8f98" />}</Tool>
              ))}
            </ViewTools>
            <WindowButtons>
              {windowIcons.map((w, i) => (
                <button key={i}><svg width="16" height="18" viewBox="0 0 18 18"><g fill="none" stroke="#858588" strokeWidth="1.300">{w}</g></svg></button>
              ))}
            </WindowButtons>
          </ViewBar>
          <Tree>
            <Node $root>
              <Twist><svg width="8" height="5" viewBox="0 0 8 5"><path d="M0 0h8L4 5z" fill="#222" /></svg></Twist>
              <Svg><g fill="#d0d0cc" stroke="#888" strokeWidth=".7"><path d="M1 9l4-2V3l3-2 4 2v4l5 3v4l-5 3-4-2-2 1-5-3z" /><path d="M5 7l3 2 4-2M8 9v6M12 13l5-3" fill="none" /></g></Svg>
              零件5  (默认 &lt; &lt;默认&gt;_显...
            </Node>
            {nodes.map((n) => (
              <Node key={n.label}>
                <Twist>{n.open && <svg width="5" height="8" viewBox="0 0 5 8"><path d="M0 0v8l5-4z" fill="#222" /></svg>}</Twist>
                <Svg>{n.art}</Svg>
                {n.label}
              </Node>
            ))}
          </Tree>
          <PlotInfo>
            <div>模型名称:零件5</div>
            <div>算例名称:静应力分析 1(-默认-)</div>
            <div>图解类型:静应力分析 节应力 应力1</div>
            <div>变形比例: <Latin $size={12}>10.7277</Latin></div>
          </PlotInfo>
          <StressModel />
          <Confirm>
            <button aria-label="确定"><svg width="30" height="26" viewBox="0 0 30 26"><path d="M3 13l9 8L27 4" fill="none" stroke="#bcd8bc" strokeWidth="6" /></svg></button>
            <button aria-label="取消"><svg width="26" height="26" viewBox="0 0 26 26"><path d="M4 4l18 18M22 4L4 22" stroke="#e2b8be" strokeWidth="8" /></svg></button>
          </Confirm>
          <Legend>
            <LegendTitle>von Mises (N/m^2)</LegendTitle>
            <LegendScale>
              <svg width="28" height="314" viewBox="0 0 28 314" aria-hidden>
                <defs>
                  <linearGradient id="scale" x1="0" x2="0" y1="0" y2="1">
                    <stop offset="0" stopColor="#f00" /><stop offset=".25" stopColor="#ff0" /><stop offset=".5" stopColor="#0f0" />
                    <stop offset=".75" stopColor="#0ff" /><stop offset="1" stopColor="#00f" />
                  </linearGradient>
                </defs>
                <rect width="24" height="312" y="0" fill="url(#scale)" />
                {levels.map((l, i) => <path key={l} d={`M24 ${i * 26 + 0.5}h3`} stroke="#c02040" />)}
                <path d="M0 312.500h27M0 .5h27" stroke="#c01040" />
              </svg>
              <ol>{levels.map((l) => <li key={l}>{l}</li>)}</ol>
            </LegendScale>
            <Yield>
              <svg width="25" height="12" viewBox="0 0 25 12"><path d="M0 6h18" stroke="#a02020" /><path d="M15 1l9 5-9 5z" fill="#e80000" /></svg>
              <span><Mixed text="屈服力: 6.204e+008" size={11} /></span>
            </Yield>
          </Legend>
          <Triad width="50" height="64" viewBox="300 586 50 64" aria-hidden>
            <path d="M311 612l20-3" stroke="#b01c1c" strokeWidth="3.500" /><path d="M331 604l11 4-10 5z" fill="#d01c1c" />
            <path d="M311 613l4 14" stroke="#1818a0" strokeWidth="3.500" /><path d="M309 627h10l-2 9z" fill="#1c1cc8" />
            <path d="M311 602v11" stroke="#222" strokeWidth="4" /><circle cx="311" cy="600" r="4.500" fill="#107028" />
            <g fontFamily="Liberation Serif, serif" fontSize="10"><text x="306" y="595" fill="#108010">Y</text><text x="339" y="610" fill="#d01020">X</text><text x="312" y="645" fill="#1010c0">Z</text></g>
          </Triad>
        </Viewport>
        <Frame />
        <Handle aria-label="折叠面板" />
        <TaskPane>
          {taskIcons.map((t, i) => <TaskButton key={i} $on={i === 7}><Svg>{t}</Svg></TaskButton>)}
        </TaskPane>

        <Sheets>
          {["M3 0v8M9 0L4 4l5 4z", "M8 0L3 4l5 4z", "M3 0l5 4-5 4z", "M8 0v8M2 0l5 4-5 4z"].map((d) => (
            <SheetNav key={d}><svg width="10" height="8" viewBox="0 0 10 8"><path d={d} fill="#777" stroke="#777" /></svg></SheetNav>
          ))}
          <SheetGap />
          <Sheet $w={45}>模型</Sheet>
          <Sheet $w={59}><Mixed text="3D 视图" size={13} /></Sheet>
          <Sheet $w={76}>运动算例 1</Sheet>
          <Sheet $w={113} $on>
            <svg width="12" height="12" viewBox="0 0 12 12"><path d="M1 2l5 4M1 6l5 3M1 10h6M4 3v6" stroke="#444" /><path d="M9 1v8M5 8l5-3M7 10l3 1" stroke="#d01828" strokeWidth="1.500" /></svg>
            静应力分析 1
          </Sheet>
        </Sheets>
      </Workspace>

      <Callouts width="320" height="560" viewBox="0 0 320 560" aria-hidden>
        <g fill="#f83c3c">
          <path d="M28 98L49 101L46 106L172 191L42 112L37 118z" />
          <path d="M60 476L81 471L80 475L316 552L75 483L73 488z" />
        </g>
      </Callouts>
    </Shell>
  );
}
